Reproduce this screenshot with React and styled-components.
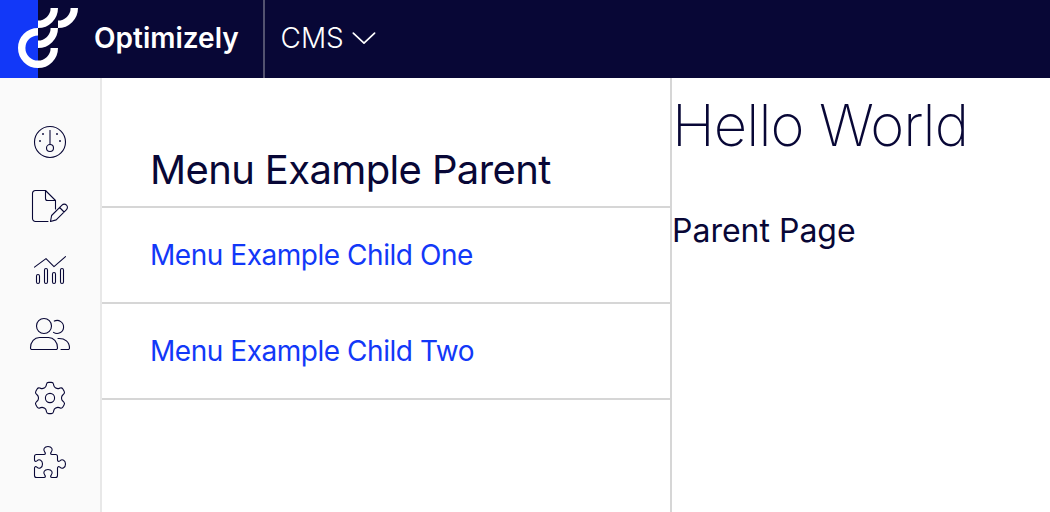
import React from 'react';
import styled, { createGlobalStyle } from 'styled-components';

const ink = '#080736';
const blue = '#1238f8';
const rule = '#d6d6d6';

const GlobalStyle = createGlobalStyle`
  * { box-sizing: border-box; }
  body {
    margin: 0;
    background: #fff;
    color: ${ink};
    font-family: Inter, "Liberation Sans", sans-serif;
    overflow: hidden;
  }
`;

const Page = styled.div`
  display: flex;
  flex-direction: column;
  height: 100vh;
`;

const TopBar = styled.header`
  display: flex;
  flex: none;
  height: 78px;
  background: ${ink};
  color: #fff;
`;

const LogoMark = styled.svg`
  flex: none;
  width: 80px;
  height: 78px;
`;

const Brand = styled.div`
  display: flex;
  align-items: center;
  width: 183px;
  padding: 0 0 3px 14px;
  font-size: 28px;
  font-weight: 600;
  white-space: nowrap;
`;

const Product = styled.button`
  display: flex;
  align-items: center;
  gap: 8px;
  padding: 0 0 3px 15.5px;
  border: 0;
  border-left: 2px solid #535270;
  background: none;
  color: inherit;
  font: 300 28px Inter, "Liberation Sans", sans-serif;
`;

const Chevron = styled.svg`
  width: 24px;
  height: 14px;
`;

const Body = styled.div`
  display: flex;
  flex: 1;
  min-height: 0;
`;

const Sidebar = styled.nav`
  display: flex;
  flex-direction: column;
  align-items: center;
  gap: 20px;
  flex: none;
  width: 102px;
  padding-top: 42px;
  border-right: 2px solid #e8e8e8;
  background: #fafafa;
`;

const NavIcon = styled.svg`
  flex: none;
  width: 44px;
  height: 44px;
  fill: none;
  stroke: ${ink};
  stroke-width: 1.1;
  stroke-linecap: round;
  stroke-linejoin: round;
`;

const MenuPanel = styled.aside`
  flex: none;
  width: 570px;
  border-right: 2px solid ${rule};
`;

const MenuTitle = styled.h2`
  height: 130px;
  margin: 0;
  padding: 68px 0 0 48px;
  border-bottom: 2px solid ${rule};
  font-size: 40px;
  font-weight: 400;
  line-height: 48px;
  letter-spacing: -0.63px;
  white-space: nowrap;
`;

const MenuLink = styled.a`
  display: block;
  height: 96px;
  padding-left: 48px;
  border-bottom: 2px solid ${rule};
  color: ${blue};
  font-size: 28px;
  line-height: 94px;
  letter-spacing: -0.46px;
  white-space: nowrap;
`;

const Content = styled.main`
  flex: 1;
  min-width: 0;
  white-space: nowrap;
`;

const Heading = styled.h1`
  margin: 11px 0 0;
  font-size: 58px;
  font-weight: 200;
  line-height: 72px;
  letter-spacing: -0.9px;
`;

const Text = styled.p`
  margin: 50px 0 0;
  font-size: 32px;
  line-height: 40px;
`;

const polar = ([x, y], deg) => {
  const a = (deg * Math.PI) / 180;
  return [x * Math.cos(a) - y * Math.sin(a), x * Math.sin(a) + y * Math.cos(a)];
};

const roundedPath = (points, radius) => {
  const toward = (from, to) => {
    const d = Math.hypot(to[0] - from[0], to[1] - from[1]);
    const t = Math.min(radius / d, 0.5);
    return [from[0] + (to[0] - from[0]) * t, from[1] + (to[1] - from[1]) * t];
  };
  const n = points.length;
  return (
    points
      .map((p, i) => {
        const a = toward(p, points[(i + n - 1) % n]);
        const b = toward(p, points[(i + 1) % n]);
        return `${i ? 'L' : 'M'}${a} Q${p} ${b}`;
      })
      .join(' ') + 'Z'
  );
};

const gearPath = roundedPath(
  [0, 60, 120, 180, 240, 300].flatMap((deg) =>
    [[-4, -11], [-3.2, -15.6], [3.2, -15.6], [4, -11]].map((p) => polar(p, deg))
  ),
  1.9
);

const Icon = ({ label, children }) => (
  <NavIcon viewBox="-22 -22 44 44" role="img" aria-label={label}>{children}</NavIcon>
);

const Dot = ({ x, y }) => <rect x={x - 1} y={y - 1} width="2" height="2" fill={ink} fillOpacity="0.7" stroke="none" />;

export default function App() {
  return (
    <Page>
      <GlobalStyle />
      <TopBar>
        <LogoMark viewBox="0 0 80 78">
          <rect width="38" height="78" fill={blue} />
          <g fill="none" stroke="#fff" strokeWidth="7.4">
            <path d="M38 31.7A16.3 16.3 0 1 0 54.3 48" />
            <path d="M38 44.3A16.3 16.3 0 0 0 54.3 28" />
            <path d="M38 24.3A16.3 16.3 0 0 0 54.3 8" />
            <path d="M58 24.3A16.3 16.3 0 0 0 74.3 8" />
          </g>
        </LogoMark>
        <Brand>Optimizely</Brand>
        <Product>
          CMS
          <Chevron viewBox="0 0 24 14" fill="none" stroke="#fff" strokeWidth="1.7">
            <path d="M1.3 2.2L12 12.2L22.6 2.2" strokeLinecap="round" strokeLinejoin="round" />
          </Chevron>
        </Product>
      </TopBar>
      <Body>
        <Sidebar>
          <Icon label="Dashboard">
            <circle r="15.5" />
            <circle cy="6" r="3.5" />
            <path d="M0-11.5V2" />
            <Dot x={-7} y={-8} />
            <Dot x={7} y={-8} />
            <Dot x={-10} y={-1} />
            <Dot x={10} y={-1} />
          </Icon>
          <Icon label="Edit">
            <path d="M-2 15.5H-14.5a3 3 0 0 1-3-3V-12.5a3 3 0 0 1 3-3H-4.5L5.5-5.5V3" />
            <path d="M-4.5-15.5V-7.5a2 2 0 0 0 2 2H5.5" />
            <path d="M.5 15.5L1.6 9.5L12-.9a3.1 3.1 0 0 1 4.5 4.5L6.2 13.9ZM9.6 1.5L14.1 6" />
          </Icon>
          <Icon label="Reports">
            <path d="M-15.5-2.9L-4-11.4L4-3.4L15.5-13.4" />
            <rect x="-13.5" y="4.5" width="3" height="9" rx="1.5" />
            <rect x="-5.5" y="-1.5" width="3" height="15" rx="1.5" />
            <rect x="2.5" y="2.5" width="3" height="11" rx="1.5" />
            <rect x="10.5" y="-1.5" width="3" height="15" rx="1.5" />
          </Icon>
          <Icon label="Users">
            <circle cx="-6" cy="-8" r="7.5" />
            <path d="M-18 15.5H6a1.5 1.5 0 0 0 1.5-1.5C7.5 7.5 3.5 3.5-1.5 3.5H-10.5C-15.5 3.5-19.5 7.5-19.5 14a1.5 1.5 0 0 0 1.5 1.5Z" />
            <path d="M4.3-12.9A6.5 6.5 0 1 1 3.5-1.6" />
            <path d="M8 4.5C15 4 19.5 8 19.5 14a1.5 1.5 0 0 1-1.5 1.5H11" />
          </Icon>
          <Icon label="Settings">
            <path d={gearPath} />
            <circle r="4.6" />
          </Icon>
          <Icon label="Add-ons">
            <path d="M-13.5-7.5H-6c1.5 0 1.8-1.2.8-2.4C-7.5-12.5-5.5-15.5-2-15.5S3.5-12.5 1.2-9.9c-1 1.2-.7 2.4.8 2.4H5.5a2 2 0 0 1 2 2V-2c0 1.5 1.2 1.8 2.4.8C12.5-3.5 15.5-1.5 15.5 2S12.5 7.5 9.9 5.2c-1.2-1-2.4-.7-2.4.8V13.5a2 2 0 0 1-2 2H2c-1.5 0-1.8-1.2-.8-2.4C3.5 10.5 1.5 7.5-2 7.5S-7.5 10.5-5.2 13.1c1 1.2.7 2.4-.8 2.4H-13.5a2 2 0 0 1-2-2V6c0-1.5 1.2-1.8 2.4-.8C-10.5 7.5-7.5 5.5-7.5 2S-10.5-3.5-13.1-1.2c-1.2 1-2.4.7-2.4-.8V-5.5a2 2 0 0 1 2-2Z" />
          </Icon>
        </Sidebar>
        <MenuPanel>
          <MenuTitle>Menu Example Parent</MenuTitle>
          <MenuLink>Menu Example Child One</MenuLink>
          <MenuLink>Menu Example Child Two</MenuLink>
        </MenuPanel>
        <Content>
          <Heading>Hello World</Heading>
          <Text>Parent Page</Text>
        </Content>
      </Body>
    </Page>
  );
}
